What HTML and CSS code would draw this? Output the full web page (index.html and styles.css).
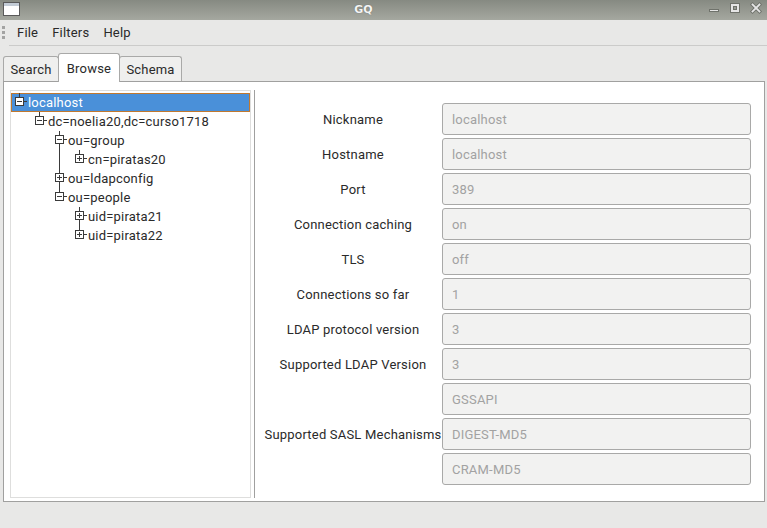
FILE: index.html
```html
<!DOCTYPE html>
<html>
<head>
<meta charset="utf-8">
<title>GQ</title>
<link rel="stylesheet" href="styles.css">
</head>
<body>
<div class="window">
  <div class="titlebar">
    <svg class="wicon" width="17" height="14" viewBox="0 0 17 14">
      <rect x="0.5" y="0.5" width="16" height="13" fill="#ffffff" stroke="#5a5a5a"/>
      <rect x="1" y="1" width="15" height="3" fill="#c3ccd6"/>
    </svg>
    <div class="title">GQ</div>
    <svg class="wbtns" width="56" height="20" viewBox="0 0 56 20">
      <rect x="2.5" y="9.5" width="9" height="2" fill="#e6e6e6" stroke="#6f726b"/>
      <rect x="23.5" y="3.5" width="9" height="9" fill="#e6e6e6" stroke="#6f726b"/>
      <rect x="26.5" y="6.5" width="3" height="3" fill="#9a9d96" stroke="#6f726b"/>
      <g stroke-linecap="square">
        <line x1="45.5" y1="4.5" x2="52.5" y2="11.5" stroke="#6f726b" stroke-width="3.6"/>
        <line x1="52.5" y1="4.5" x2="45.5" y2="11.5" stroke="#6f726b" stroke-width="3.6"/>
        <line x1="45.5" y1="4.5" x2="52.5" y2="11.5" stroke="#e6e6e6" stroke-width="1.8"/>
        <line x1="52.5" y1="4.5" x2="45.5" y2="11.5" stroke="#e6e6e6" stroke-width="1.8"/>
      </g>
    </svg>
  </div>

  <div class="menubar">
    <div class="grip"><i></i><i></i><i></i></div>
    <span class="menu m-file">File</span>
    <span class="menu m-filters">Filters</span>
    <span class="menu m-help">Help</span>
  </div>
  <div class="menusep"></div>

  <div class="notebook">
    <div class="tabs">
      <div class="tab tab-search">Search</div>
      <div class="tab tab-browse active">Browse</div>
      <div class="tab tab-schema">Schema</div>
    </div>
    <div class="panel">
      <div class="tree">
        <div class="row selected">
          <svg width="13" height="19" viewBox="0 0 13 19">
            <g stroke="#3a3a3a" fill="none">
              <line x1="4.5" y1="0" x2="4.5" y2="4"/>
              <line x1="9" y1="8.5" x2="12" y2="8.5"/>
              <rect x="0.5" y="4.5" width="8" height="8" fill="#ffffff"/>
              <line x1="2" y1="8.5" x2="7" y2="8.5"/>
            </g>
          </svg>
          <span class="label">localhost</span>
        </div>
        <div class="row">
          <svg width="33" height="19" viewBox="0 0 33 19">
            <g stroke="#3a3a3a" fill="none">
              <line x1="24.5" y1="0" x2="24.5" y2="4"/>
              <line x1="29" y1="8.5" x2="32" y2="8.5"/>
              <rect x="20.5" y="4.5" width="8" height="8" fill="#ffffff"/>
              <line x1="22" y1="8.5" x2="27" y2="8.5"/>
            </g>
          </svg>
          <span class="label">dc=noelia20,dc=curso1718</span>
        </div>
        <div class="row">
          <svg width="53" height="19" viewBox="0 0 53 19">
            <g stroke="#3a3a3a" fill="none">
              <line x1="44.5" y1="0" x2="44.5" y2="4"/>
              <line x1="44.5" y1="13" x2="44.5" y2="19"/>
              <line x1="49" y1="8.5" x2="52" y2="8.5"/>
              <rect x="40.5" y="4.5" width="8" height="8" fill="#ffffff"/>
              <line x1="42" y1="8.5" x2="47" y2="8.5"/>
            </g>
          </svg>
          <span class="label">ou=group</span>
        </div>
        <div class="row">
          <svg width="73" height="19" viewBox="0 0 73 19">
            <g stroke="#3a3a3a" fill="none">
              <line x1="44.5" y1="0" x2="44.5" y2="19"/>
              <line x1="64.5" y1="0" x2="64.5" y2="4"/>
              <line x1="69" y1="8.5" x2="72" y2="8.5"/>
              <rect x="60.5" y="4.5" width="8" height="8" fill="#ffffff"/>
              <line x1="62" y1="8.5" x2="67" y2="8.5"/>
              <line x1="64.5" y1="6" x2="64.5" y2="11"/>
            </g>
          </svg>
          <span class="label">cn=piratas20</span>
        </div>
        <div class="row">
          <svg width="53" height="19" viewBox="0 0 53 19">
            <g stroke="#3a3a3a" fill="none">
              <line x1="44.5" y1="0" x2="44.5" y2="4"/>
              <line x1="44.5" y1="13" x2="44.5" y2="19"/>
              <line x1="49" y1="8.5" x2="52" y2="8.5"/>
              <rect x="40.5" y="4.5" width="8" height="8" fill="#ffffff"/>
              <line x1="42" y1="8.5" x2="47" y2="8.5"/>
              <line x1="44.5" y1="6" x2="44.5" y2="11"/>
            </g>
          </svg>
          <span class="label">ou=ldapconfig</span>
        </div>
        <div class="row">
          <svg width="53" height="19" viewBox="0 0 53 19">
            <g stroke="#3a3a3a" fill="none">
              <line x1="44.5" y1="0" x2="44.5" y2="4"/>
              <line x1="49" y1="8.5" x2="52" y2="8.5"/>
              <rect x="40.5" y="4.5" width="8" height="8" fill="#ffffff"/>
              <line x1="42" y1="8.5" x2="47" y2="8.5"/>
            </g>
          </svg>
          <span class="label">ou=people</span>
        </div>
        <div class="row">
          <svg width="73" height="19" viewBox="0 0 73 19">
            <g stroke="#3a3a3a" fill="none">
              <line x1="64.5" y1="0" x2="64.5" y2="4"/>
              <line x1="64.5" y1="13" x2="64.5" y2="19"/>
              <line x1="69" y1="8.5" x2="72" y2="8.5"/>
              <rect x="60.5" y="4.5" width="8" height="8" fill="#ffffff"/>
              <line x1="62" y1="8.5" x2="67" y2="8.5"/>
              <line x1="64.5" y1="6" x2="64.5" y2="11"/>
            </g>
          </svg>
          <span class="label">uid=pirata21</span>
        </div>
        <div class="row">
          <svg width="73" height="19" viewBox="0 0 73 19">
            <g stroke="#3a3a3a" fill="none">
              <line x1="64.5" y1="0" x2="64.5" y2="4"/>
              <line x1="69" y1="8.5" x2="72" y2="8.5"/>
              <rect x="60.5" y="4.5" width="8" height="8" fill="#ffffff"/>
              <line x1="62" y1="8.5" x2="67" y2="8.5"/>
              <line x1="64.5" y1="6" x2="64.5" y2="11"/>
            </g>
          </svg>
          <span class="label">uid=pirata22</span>
        </div>
      </div>

      <div class="splitter"></div>

      <div class="form">
        <div class="flabel">Nickname</div>
        <div class="field">localhost</div>
        <div class="flabel">Hostname</div>
        <div class="field">localhost</div>
        <div class="flabel">Port</div>
        <div class="field">389</div>
        <div class="flabel">Connection caching</div>
        <div class="field">on</div>
        <div class="flabel">TLS</div>
        <div class="field">off</div>
        <div class="flabel">Connections so far</div>
        <div class="field">1</div>
        <div class="flabel">LDAP protocol version</div>
        <div class="field">3</div>
        <div class="flabel">Supported LDAP Version</div>
        <div class="field">3</div>
        <div class="flabel sasl">Supported SASL Mechanisms</div>
        <div class="field f-gssapi">GSSAPI</div>
        <div class="field f-digest">DIGEST-MD5</div>
        <div class="field f-cram">CRAM-MD5</div>
      </div>
    </div>
  </div>
</div>
</body>
</html>
```

FILE: styles.css
```css
* { box-sizing: border-box; }

html, body {
  margin: 0;
  padding: 0;
  width: 767px;
  height: 528px;
  overflow: hidden;
  background: #e8e8e7;
  font-family: Roboto, "Liberation Sans", sans-serif;
  font-size: 13px;
  letter-spacing: 0.2px;
  color: #2a2a2a;
}

.window {
  width: 767px;
  height: 528px;
}

/* ---------- title bar ---------- */
.titlebar {
  height: 20px;
  display: flex;
  align-items: center;
  background: linear-gradient(#868a82, #a5a8a0);
}

.wicon {
  display: block;
  margin-left: 3px;
  margin-top: -2px;
}

.title {
  flex: 1;
  text-align: center;
  font-family: "DejaVu Sans", sans-serif;
  font-weight: bold;
  font-size: 11px;
  letter-spacing: 0;
  color: #f4f4f4;
  text-shadow: 0 0 1px #5d605a;
  line-height: 20px;
}

.wbtns {
  display: block;
  margin-right: 4px;
}

/* ---------- menu bar ---------- */
.menubar {
  height: 25px;
  display: flex;
  align-items: center;
}

.grip {
  width: 3px;
  margin-left: 2px;
  display: flex;
  flex-direction: column;
  gap: 2px;
}

.grip i {
  display: block;
  width: 3px;
  height: 3px;
  background: #a3a3a2;
}

.menu {
  line-height: 25px;
}

.m-file { margin-left: 12px; }
.m-filters { margin-left: 14px; }
.m-help { margin-left: 14px; }

.menusep {
  height: 1px;
  margin-left: 9px;
  background: #cbcbca;
}

/* ---------- notebook ---------- */
.notebook {
  margin: 0 2px 0 3px;
}

.tabs {
  height: 35px;
  display: flex;
  align-items: flex-end;
}

.tab {
  height: 25px;
  border: 1px solid #a9a9a8;
  border-bottom: none;
  border-radius: 3px 3px 0 0;
  background: #efefee;
  text-align: center;
  line-height: 24px;
  padding-top: 1px;
}

.tab-search { width: 56px; }
.tab-browse { width: 62px; margin-left: -1px; }
.tab-schema { width: 63px; margin-left: -1px; }

.tab.active {
  position: relative;
  z-index: 2;
  height: 29px;
  margin-bottom: -1px;
  background: #ffffff;
  line-height: 25px;
  padding-top: 2px;
}

.panel {
  height: 421px;
  border: 1px solid #a0a09f;
  background: #ffffff;
  display: flex;
  padding: 8px 0 3px 6px;
}

/* ---------- tree ---------- */
.tree {
  width: 241px;
  border: 1px solid #dededd;
  background: #ffffff;
  padding-top: 2px;
}

.row {
  height: 19px;
  display: flex;
  align-items: center;
  padding-left: 4px;
  white-space: nowrap;
}

.row svg {
  display: block;
  flex: none;
}

.row .label {
  line-height: 19px;
}

.row.selected {
  background: #4a90d9;
  box-shadow: inset 0 0 0 1px #c0782f;
}

.row.selected .label {
  color: #ffffff;
}

.splitter {
  width: 1px;
  margin-left: 3px;
  background: #a0a09f;
}

/* ---------- form ---------- */
.form {
  margin-top: 13px;
  padding-left: 9px;
  display: grid;
  grid-template-columns: 178px 309px;
  grid-auto-rows: 32px;
  row-gap: 3px;
  align-content: start;
}

.flabel {
  display: flex;
  align-items: center;
  justify-content: center;
  text-align: center;
  white-space: nowrap;
}

.flabel.sasl {
  grid-column: 1;
  grid-row: 9 / span 3;
}

.field {
  grid-column: 2;
  border: 1px solid #a9a9a8;
  border-radius: 3px;
  background: #f2f2f1;
  color: #a2a2a2;
  padding-left: 9px;
  display: flex;
  align-items: center;
}
```
